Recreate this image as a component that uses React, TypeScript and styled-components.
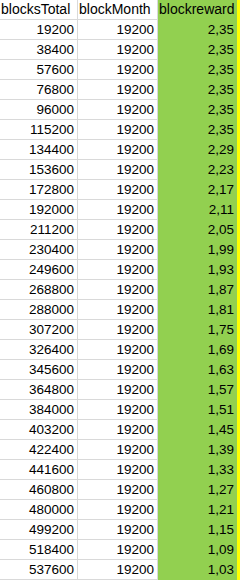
import React from "react";
import styled, { createGlobalStyle } from "styled-components";

const Global = createGlobalStyle`
  html, body { margin: 0; padding: 0; background: #ffffff; }
  body { font-family: "Liberation Sans", Arial, sans-serif; }
`;

const Sheet = styled.div`
  display: grid;
  grid-template-columns: 78px 80px 79px 3px;
  grid-auto-rows: 20px;
  width: 240px;
  overflow: hidden;
  font-family: "Liberation Sans", Arial, sans-serif;
  font-size: 13.5px;
  color: #000000;
`;

const Cell = styled.div<{ $align?: "left" | "right"; $fill?: string; $head?: boolean }>`
  box-sizing: border-box;
  display: flex;
  align-items: flex-end;
  justify-content: ${(p) => (p.$align === "right" ? "flex-end" : "flex-start")};
  padding: ${(p) => (p.$align === "right" ? "0 3px 3px 0" : "0 0 3px 1px")};
  background: ${(p) => p.$fill ?? "#ffffff"};
  border-right: ${(p) => (p.$fill ? "none" : "1px solid #d9d9d9")};
  border-bottom: ${(p) => (p.$fill ? "none" : "1px solid #d9d9d9")};
  font-size: ${(p) => (p.$head ? "14px" : "13.5px")};
  line-height: 1;
  white-space: nowrap;
`;

const GreenCell = styled(Cell)`
  padding-bottom: 4px;
`;

const Strip = styled.div`
  background: #ffff00;
`;

const GREEN = "#92d050";

const rows = Array.from({ length: 28 }, (_, k) => {
  const i = k + 1;
  const reward = i <= 6 ? 2.35 : 2.29 - 0.06 * (i - 7);
  return {
    total: 19200 * i,
    month: 19200,
    reward: reward.toFixed(2).replace(".", ","),
  };
});

export default function App() {
  return (
    <>
      <Global />
      <Sheet>
        <Cell $head>blocksTotal</Cell>
        <Cell $head>blockMonth</Cell>
        <GreenCell $head $fill={GREEN}>blockreward</GreenCell>
        <Strip />
        {rows.map((r) => (
          <React.Fragment key={r.total}>
            <Cell $align="right">{r.total}</Cell>
            <Cell $align="right">{r.month}</Cell>
            <GreenCell $align="right" $fill={GREEN}>
              {r.reward}
            </GreenCell>
            <Strip />
          </React.Fragment>
        ))}
      </Sheet>
    </>
  );
}
